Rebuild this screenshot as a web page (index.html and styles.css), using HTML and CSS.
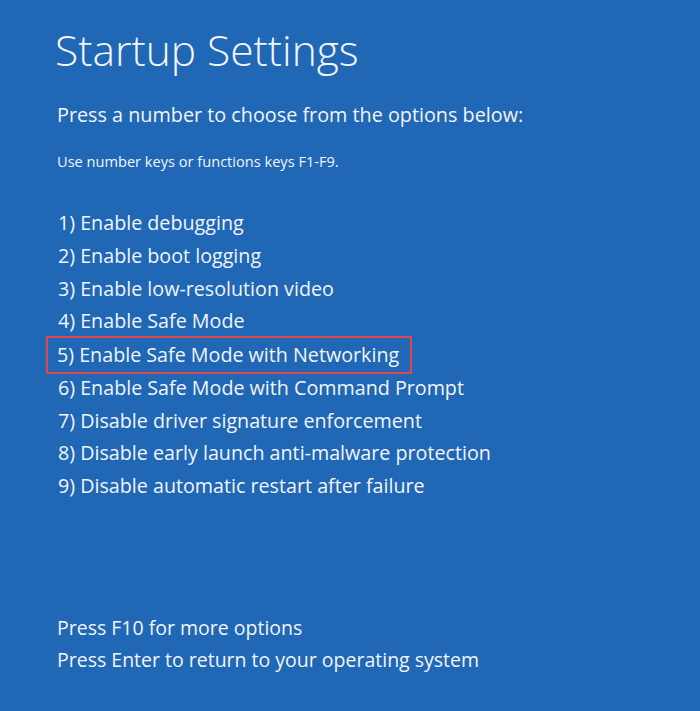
FILE: index.html
```html
<!DOCTYPE html>
<html lang="en">
<head>
    <meta charset="UTF-8">
    <meta name="viewport" content="width=device-width, initial-scale=1.0">
    <title>Startup Settings</title>
    <link rel="stylesheet" href="styles.css">
</head>
<body>
    <div class="pantalla">
        <h1 class="titulo">Startup Settings</h1>
        <p class="indicacion">Press a number to choose from the options below:</p>
        <p class="nota">Use number keys or functions keys F1-F9.</p>

        <ul class="opciones">
            <li class="opcion">1) Enable debugging</li>
            <li class="opcion">2) Enable boot logging</li>
            <li class="opcion">3) Enable low-resolution video</li>
            <li class="opcion">4) Enable Safe Mode</li>
            <li class="opcion marcada">5) Enable Safe Mode with Networking</li>
            <li class="opcion">6) Enable Safe Mode with Command Prompt</li>
            <li class="opcion">7) Disable driver signature enforcement</li>
            <li class="opcion">8) Disable early launch anti-malware protection</li>
            <li class="opcion">9) Disable automatic restart after failure</li>
        </ul>

        <div class="pie">
            <p class="linea">Press F10 for more options</p>
            <p class="linea">Press Enter to return to your operating system</p>
        </div>
    </div>
</body>
</html>
```

FILE: styles.css
```css
body {
    margin: 0;
    background-color: #2067b5;
    color: #f2f5fa;
    font-family: "Open Sans", "Noto Sans", sans-serif;
}
.pantalla {
    height: 711px;
    padding: 0 0 0 55px;
    box-sizing: border-box;
}
.titulo {
    margin: 0;
    padding-top: 22px;
    font-size: 42.5px;
    font-weight: 300;
    line-height: 56px;
}
.indicacion {
    margin: 24px 0 0 2px;
    font-size: 19.8px;
    line-height: 26px;
}
.nota {
    margin: 23px 0 0 2px;
    font-size: 14.6px;
    line-height: 20px;
}
.opciones {
    list-style: none;
    margin: 36px 0 0 0;
    padding: 0;
}
.opcion {
    font-size: 19.7px;
    line-height: 32.75px;
    padding-left: 3px;
}
.opcion.marcada {
    display: inline-block;
    margin: -1px 0 -1px -8px;
    padding: 2px 12px 1px 10px;
    outline: 2px solid #e0474c;
    outline-offset: -1px;
}
.pie {
    margin-top: 109px;
}
.linea {
    margin: 0 0 0 2px;
    font-size: 19.5px;
    line-height: 32px;
}
```
